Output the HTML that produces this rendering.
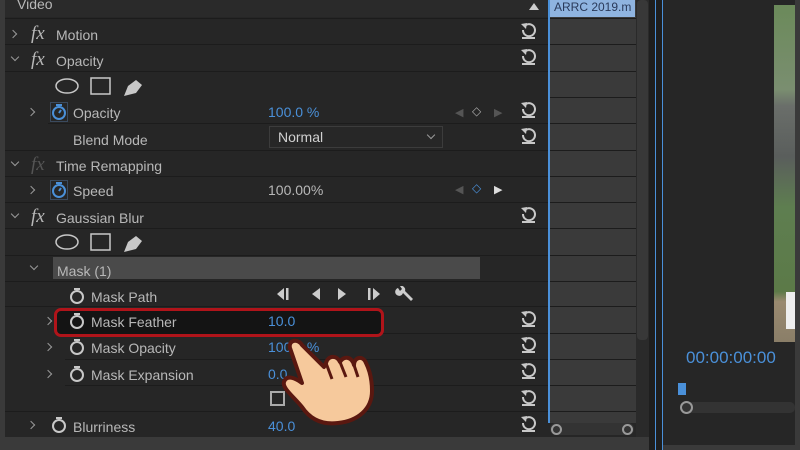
<!DOCTYPE html>
<html><head><meta charset="utf-8"><style>
*{margin:0;padding:0;box-sizing:border-box}
body{width:800px;height:450px;overflow:hidden;background:#3a3a3a;font-family:"Liberation Sans",sans-serif;position:relative}
.a{position:absolute}
.t{position:absolute;font-size:14px;color:#b8b8b8;line-height:16px;white-space:nowrap}
.b{color:#4a90d9}
.sep{position:absolute;left:5px;width:631px;height:1px;background:#1c1c1c}
.chev{position:absolute;width:6px;height:6px;border-right:1.5px solid #9a9a9a;border-bottom:1.5px solid #9a9a9a}
.r{transform:rotate(-45deg)}
.d{transform:rotate(45deg)}
.fx{position:absolute;font-family:"Liberation Serif",serif;font-style:italic;font-size:19px;color:#b8b8b8;line-height:20px}
.rs{position:absolute;left:519px;width:18px;height:18px}
</style></head><body>
<div class="a" style="left:5px;top:0;width:543px;height:437px;background:#262626"></div>
<div class="a" style="left:5px;top:0;width:543px;height:17px;background:#2a2a2a"></div>
<div class="t" style="left:17px;top:-4px">Video</div>
<div class="sep" style="top:18px"></div><div class="sep" style="top:44px"></div><div class="sep" style="top:71px"></div>
<div class="sep" style="top:97px;left:548px;width:88px"></div>
<div class="sep" style="top:123px;left:48px;width:588px"></div><div class="sep" style="top:150px"></div><div class="sep" style="top:176px"></div>
<div class="sep" style="top:202px"></div><div class="sep" style="top:228px"></div><div class="sep" style="top:255px"></div>
<div class="sep" style="top:281px"></div><div class="sep" style="top:306px"></div><div class="sep" style="top:333px;left:65px;width:571px"></div>
<div class="sep" style="top:359px;left:65px;width:571px"></div><div class="sep" style="top:385px;left:65px;width:571px"></div><div class="sep" style="top:411px"></div>

<div class="chev r" style="left:10px;top:31px"></div><div class="fx" style="left:31px;top:24px">fx</div><div class="t" style="left:56px;top:27px">Motion</div>
<div class="chev d" style="left:12px;top:54px"></div><div class="fx" style="left:31px;top:50px">fx</div><div class="t" style="left:56px;top:53px">Opacity</div>
<svg class="a" style="left:54px;top:76px" width="95" height="22"><ellipse cx="13" cy="10" rx="11" ry="7" fill="none" stroke="#c8c8c8" stroke-width="1.5"/><rect x="37" y="2" width="19" height="16" fill="none" stroke="#c8c8c8" stroke-width="1.5"/><path d="M70 20 L74 10 L82 4 L88 9 L82 17 Z" fill="#c8c8c8"/></svg>
<div class="chev r" style="left:28px;top:109px"></div>
<svg class="a" style="left:50px;top:102px" width="18" height="20"><rect x="0.5" y="0.5" width="17" height="19" fill="none" stroke="#3a4a5e"/><circle cx="9" cy="11" r="6" fill="none" stroke="#4a90d9" stroke-width="2"/><path d="M6 3h6M9 11l2-3" stroke="#4a90d9" stroke-width="2"/></svg>
<div class="t" style="left:73px;top:105px">Opacity</div><div class="t b" style="left:268px;top:104px">100.0 %</div>
<div class="a" style="left:455px;top:106px;color:#555;font-size:11px">◀</div><div class="a" style="left:472px;top:104px;color:#aaa;font-size:12px">◇</div><div class="a" style="left:494px;top:106px;color:#555;font-size:11px">▶</div>
<div class="t" style="left:73px;top:132px">Blend Mode</div>
<div class="a" style="left:269px;top:126px;width:174px;height:22px;border:1px solid #3c3c3c;background:#272727"></div>
<div class="t" style="left:278px;top:129px;color:#d0d0d0">Normal</div><div class="chev d" style="left:428px;top:132px"></div>
<div class="chev d" style="left:12px;top:159px"></div><div class="fx" style="left:31px;top:155px;color:#555">fx</div><div class="t" style="left:56px;top:158px">Time Remapping</div>
<div class="chev r" style="left:28px;top:187px"></div>
<svg class="a" style="left:50px;top:180px" width="18" height="20"><rect x="0.5" y="0.5" width="17" height="19" fill="none" stroke="#3a4a5e"/><circle cx="9" cy="11" r="6" fill="none" stroke="#4a90d9" stroke-width="2"/><path d="M6 3h6M9 11l2-3" stroke="#4a90d9" stroke-width="2"/></svg>
<div class="t" style="left:73px;top:183px">Speed</div><div class="t" style="left:268px;top:182px">100.00%</div>
<div class="a" style="left:455px;top:183px;color:#555;font-size:11px">◀</div><div class="a" style="left:472px;top:181px;color:#4a90d9;font-size:12px">◇</div><div class="a" style="left:494px;top:183px;color:#ddd;font-size:11px">▶</div>
<div class="chev d" style="left:12px;top:211px"></div><div class="fx" style="left:31px;top:207px">fx</div><div class="t" style="left:56px;top:210px">Gaussian Blur</div>
<svg class="a" style="left:54px;top:232px" width="95" height="22"><ellipse cx="13" cy="10" rx="11" ry="7" fill="none" stroke="#c8c8c8" stroke-width="1.5"/><rect x="37" y="2" width="19" height="16" fill="none" stroke="#c8c8c8" stroke-width="1.5"/><path d="M70 20 L74 10 L82 4 L88 9 L82 17 Z" fill="#c8c8c8"/></svg>
<div class="a" style="left:53px;top:257px;width:427px;height:22px;background:#4a4a4a"></div>
<div class="chev d" style="left:31px;top:263px"></div><div class="t" style="left:57px;top:263px">Mask (1)</div>
<svg class="a" style="left:68px;top:286px" width="18" height="20"><circle cx="9" cy="11" r="6" fill="none" stroke="#c8c8c8" stroke-width="2"/><path d="M6 3h6" stroke="#c8c8c8" stroke-width="2"/></svg>
<div class="t" style="left:91px;top:289px">Mask Path</div>
<svg class="a" style="left:276px;top:286px" width="140" height="16" fill="#ccc"><path d="M8 2 L1 8 L8 14Z"/><rect x="10" y="2" width="2.5" height="12"/><path d="M44 2 L36 8 L44 14Z"/><path d="M62 2 L70 8 L62 14Z"/><rect x="92" y="2" width="2.5" height="12"/><path d="M97 2 L104 8 L97 14Z"/><path d="M122 2 a4 4 0 1 0 5 5 L135 15 L137 13 L129 5 a4 4 0 0 0 -5 -5 l2 3 -2 2z"/></svg>
<div class="a" style="left:54px;top:308px;width:330px;height:29px;border:3px solid #b0141a;border-radius:7px;background:#141414"></div>
<div class="chev r" style="left:45px;top:318px"></div>
<svg class="a" style="left:68px;top:311px" width="18" height="20"><circle cx="9" cy="11" r="6" fill="none" stroke="#c8c8c8" stroke-width="2"/><path d="M6 3h6" stroke="#c8c8c8" stroke-width="2"/></svg>
<div class="t" style="left:91px;top:314px">Mask Feather</div><div class="t b" style="left:268px;top:313px">10.0</div>
<div class="chev r" style="left:45px;top:344px"></div>
<svg class="a" style="left:68px;top:337px" width="18" height="20"><circle cx="9" cy="11" r="6" fill="none" stroke="#c8c8c8" stroke-width="2"/><path d="M6 3h6" stroke="#c8c8c8" stroke-width="2"/></svg>
<div class="t" style="left:91px;top:340px">Mask Opacity</div><div class="t b" style="left:268px;top:339px">100.0 %</div>
<div class="chev r" style="left:45px;top:371px"></div>
<svg class="a" style="left:68px;top:364px" width="18" height="20"><circle cx="9" cy="11" r="6" fill="none" stroke="#c8c8c8" stroke-width="2"/><path d="M6 3h6" stroke="#c8c8c8" stroke-width="2"/></svg>
<div class="t" style="left:91px;top:367px">Mask Expansion</div><div class="t b" style="left:268px;top:366px">0.0</div>
<div class="a" style="left:270px;top:391px;width:15px;height:15px;border:2px solid #aaa"></div>
<div class="chev r" style="left:28px;top:422px"></div>
<svg class="a" style="left:50px;top:415px" width="18" height="20"><circle cx="9" cy="11" r="6" fill="none" stroke="#c8c8c8" stroke-width="2"/><path d="M6 3h6" stroke="#c8c8c8" stroke-width="2"/></svg>
<div class="t" style="left:73px;top:419px">Blurriness</div><div class="t b" style="left:268px;top:418px">40.0</div>
<svg width="0" height="0" style="position:absolute"><defs><g id="r"><path d="M4 9 A6 6 0 1 0 7 4" fill="none" stroke="#c8c8c8" stroke-width="2"/><path d="M2 3 L8 2 L7 8 Z" fill="#c8c8c8"/><path d="M3 17 H16" stroke="#c8c8c8" stroke-width="2"/></g></defs></svg>
<svg class="rs" style="top:21px"><use href="#r"/></svg><svg class="rs" style="top:47px"><use href="#r"/></svg>
<svg class="rs" style="top:100px"><use href="#r"/></svg><svg class="rs" style="top:126px"><use href="#r"/></svg>
<svg class="rs" style="top:205px"><use href="#r"/></svg><svg class="rs" style="top:309px"><use href="#r"/></svg>
<svg class="rs" style="top:335px"><use href="#r"/></svg><svg class="rs" style="top:361px"><use href="#r"/></svg>
<svg class="rs" style="top:388px"><use href="#r"/></svg><svg class="rs" style="top:414px"><use href="#r"/></svg>
<div class="a" style="left:529px;top:3px;border:5px solid transparent;border-bottom:7px solid #ccc;border-top:0"></div>
<!-- timeline -->
<div class="a" style="left:548px;top:0;width:2px;height:423px;background:#4a90d9"></div>
<div class="a" style="left:550px;top:0;width:85px;height:17px;background:#8fb4e0;color:#2a3a5a;font-size:12px;padding-left:4px;line-height:14px;overflow:hidden">ARRC 2019.m</div>
<div class="a" style="left:548px;top:423px;width:88px;height:14px;background:#262626"></div>
<div class="a" style="left:550px;top:423px;width:84px;height:12px;background:#333;border-radius:6px"></div>
<div class="a" style="left:551px;top:424px;width:11px;height:11px;border:2px solid #999;border-radius:50%"></div>
<div class="a" style="left:622px;top:424px;width:11px;height:11px;border:2px solid #999;border-radius:50%"></div>
<div class="a" style="left:636px;top:0;width:13px;height:437px;background:#2a2a2a"></div>
<div class="a" style="left:637px;top:0;width:11px;height:340px;background:#383838;border-radius:4px"></div>
<div class="a" style="left:649px;top:0;width:13px;height:450px;background:#1e1e1e"></div>
<div class="a" style="left:655px;top:0;width:1px;height:450px;background:#4a90d9"></div>
<div class="a" style="left:662px;top:0;width:1px;height:450px;background:#4a90d9"></div>
<div class="a" style="left:663px;top:0;width:132px;height:445px;background:#262626"></div>
<div class="a" style="left:774px;top:5px;width:21px;height:337px;background:linear-gradient(#6b8a5a 0,#7a8e70 25%,#6a6e6a 30%,#5a5e5c 45%,#5e7e50 60%,#5c7a48 85%,#9a8a70 88%,#8a7e68 100%)"></div>
<div class="a" style="left:786px;top:292px;width:9px;height:37px;background:#eee"></div>
<div class="a" style="left:686px;top:348px;color:#4a90d9;font-size:17px">00:00:00:00</div>
<div class="a" style="left:678px;top:383px;width:8px;height:12px;background:#4a90d9"></div>
<div class="a" style="left:685px;top:402px;width:110px;height:11px;background:#333;border-radius:5px"></div>
<div class="a" style="left:680px;top:401px;width:13px;height:13px;border:2px solid #999;border-radius:50%;background:#333"></div>
<svg class="a" style="left:280px;top:335px" width="100" height="95" viewBox="0 0 100 95">
<path d="M22 10 C18 3 8 5 10 13 L22 48 C14 42 6 40 4 47 C2 53 14 62 22 72 C30 84 42 90 58 88 C78 86 92 74 92 56 C92 44 90 36 86 28 C83 20 74 22 74 30 C72 22 64 20 60 27 C57 20 48 20 46 28 L44 32 Z" fill="#f6c99c" stroke="#5a1810" stroke-width="4" stroke-linejoin="round"/>
<path d="M46 28 L52 44 M60 27 L66 42 M74 30 L78 42" stroke="#5a1810" stroke-width="3" fill="none"/>
</svg>
</body></html>
